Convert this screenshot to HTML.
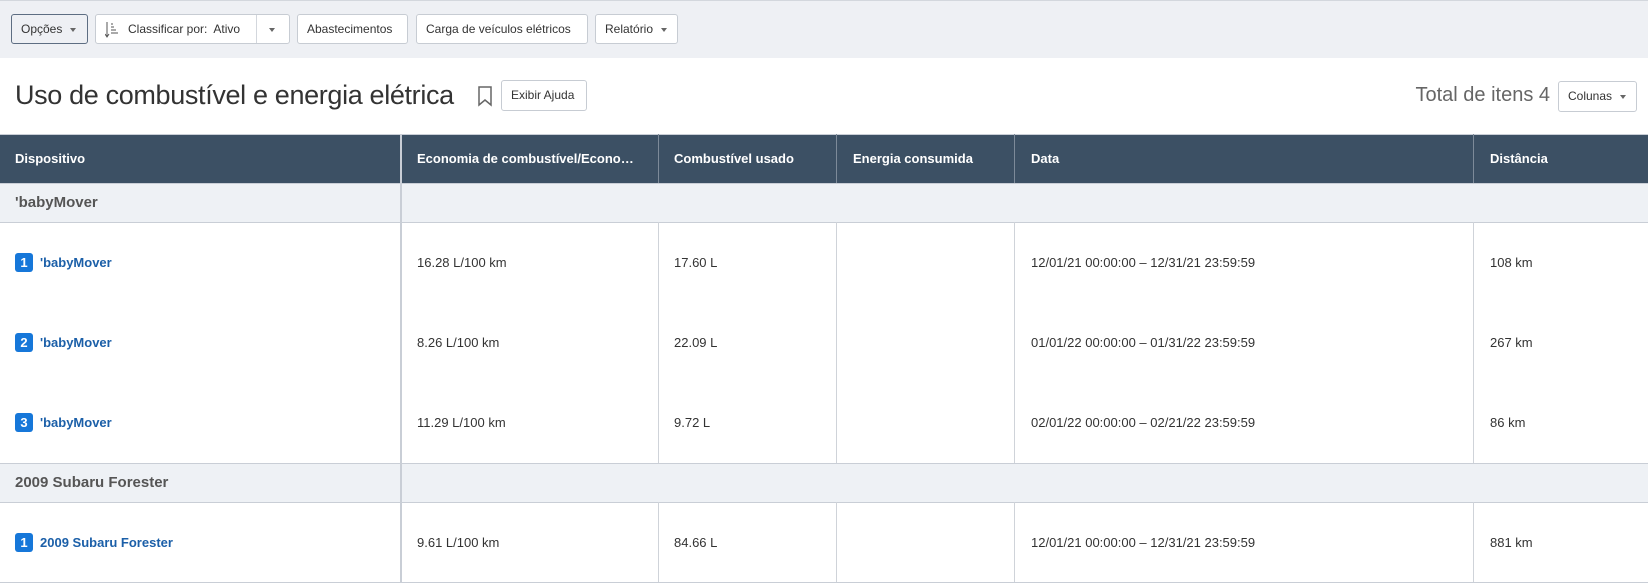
<!DOCTYPE html>
<html><head><meta charset="utf-8"><style>
*{box-sizing:border-box;margin:0;padding:0}
body{width:1648px;height:585px;overflow:hidden;background:#fff;font-family:"Liberation Sans",Arial,sans-serif;position:relative;color:#333}
.tb{position:absolute;left:0;top:0;width:1648px;height:58px;background:#eef0f4;border-top:1px solid #d3d7dd}
.btn{position:absolute;top:14px;height:30px;border:1px solid #c7ccd3;border-radius:3px;background:#fff;font-size:12px;color:#333;line-height:28px;padding:0 9px;white-space:nowrap}
.car{display:inline-block;width:0;height:0;border-left:3.5px solid transparent;border-right:3.5px solid transparent;border-top:4px solid #666;vertical-align:middle;margin-left:8px}
.abs{position:absolute}
.cell{position:absolute;font-size:13px;white-space:nowrap}
.hl{position:absolute;height:1px;background:#c9ced6;left:0;width:1648px}
.vl{position:absolute;width:1px;background:#cfd3d9}
.badge{display:inline-block;width:18px;height:19px;background:#1677d9;color:#fff;border-radius:3px;font-weight:bold;font-size:13px;text-align:center;line-height:19px;margin-right:7px;vertical-align:middle}
.lnk{color:#1b5fa8;font-weight:bold;vertical-align:middle}
</style></head><body>
<div class="tb"></div>
<div class="btn" style="left:11px;width:77px;border-color:#5d6d82;background:#eef0f4">Opções<span class="car"></span></div>
<div class="btn" style="left:95px;width:195px;padding:0">
 <svg class="abs" style="left:9px;top:7px" width="14" height="16" viewBox="0 0 14 16"><path d="M2 0v14M0 12l2 3 2-3M6 2h2M6 5h3M6 8h5M6 11h7" stroke="#555" stroke-width="1" fill="none"/></svg>
 <span class="abs" style="left:32px;top:0">Classificar por:&nbsp; Ativo</span>
 <span class="abs" style="left:160px;top:0;height:28px;border-left:1px solid #d3d7dd;width:34px"><span class="car" style="margin-left:12px"></span></span>
</div>
<div class="btn" style="left:297px;width:111px">Abastecimentos</div>
<div class="btn" style="left:416px;width:172px">Carga de veículos elétricos</div>
<div class="btn" style="left:595px;width:83px">Relatório<span class="car"></span></div>

<div class="abs" style="left:15px;top:80px;font-size:27px;letter-spacing:-0.35px;color:#333;white-space:nowrap">Uso de combustível e energia elétrica</div>
<svg class="abs" style="left:477px;top:86px" width="16" height="21" viewBox="0 0 16 21"><path d="M2 1h12v18l-6-5-6 5z" stroke="#666" stroke-width="1.5" fill="none"/></svg>
<div class="btn" style="left:501px;top:80px;width:86px;height:31px">Exibir Ajuda</div>
<div class="abs" style="right:98px;top:84px;font-size:20px;color:#666">Total de itens 4</div>
<div class="btn" style="left:1558px;top:81px;width:79px;height:31px">Colunas<span class="car"></span></div>

<div class="abs" style="left:0;top:134px;width:1648px;height:49px;background:#3c5064;border-top:1px solid #c9ced6"></div>
<div class="abs" style="left:0;top:183px;width:1648px;height:39px;background:#eef1f5"></div>
<div class="abs" style="left:0;top:463px;width:1648px;height:39px;background:#eef1f5"></div>
<div class="hl" style="top:183px"></div><div class="hl" style="top:222px"></div>
<div class="hl" style="top:463px"></div><div class="hl" style="top:502px"></div><div class="hl" style="top:582px"></div>
<div class="vl" style="left:400px;top:134px;height:449px;width:2px;background:#c9ced6"></div>
<div class="vl" style="left:658px;top:134px;height:49px;background:#7d8a99"></div>
<div class="vl" style="left:836px;top:134px;height:49px;background:#7d8a99"></div>
<div class="vl" style="left:1014px;top:134px;height:49px;background:#7d8a99"></div>
<div class="vl" style="left:1473px;top:134px;height:49px;background:#7d8a99"></div>
<div class="vl" style="left:658px;top:222px;height:241px"></div><div class="vl" style="left:836px;top:222px;height:241px"></div>
<div class="vl" style="left:1014px;top:222px;height:241px"></div><div class="vl" style="left:1473px;top:222px;height:241px"></div>
<div class="vl" style="left:658px;top:502px;height:80px"></div><div class="vl" style="left:836px;top:502px;height:80px"></div>
<div class="vl" style="left:1014px;top:502px;height:80px"></div><div class="vl" style="left:1473px;top:502px;height:80px"></div>

<div style="color:#fff;font-weight:bold;font-size:13px">
<div class="cell" style="left:15px;top:151px">Dispositivo</div>
<div class="cell" style="left:417px;top:151px">Economia de combustível/Econo…</div>
<div class="cell" style="left:674px;top:151px">Combustível usado</div>
<div class="cell" style="left:853px;top:151px">Energia consumida</div>
<div class="cell" style="left:1031px;top:151px">Data</div>
<div class="cell" style="left:1490px;top:151px">Distância</div>
</div>
<div class="cell" style="left:15px;top:194px;font-size:15px;font-weight:bold;color:#555">'babyMover</div>
<div class="cell" style="left:15px;top:474px;font-size:15px;font-weight:bold;color:#555">2009 Subaru Forester</div>

<div class="cell" style="left:15px;top:253px"><span class="badge">1</span><span class="lnk">'babyMover</span></div>
<div class="cell" style="left:417px;top:255px">16.28 L/100 km</div><div class="cell" style="left:674px;top:255px">17.60 L</div>
<div class="cell" style="left:1031px;top:255px">12/01/21 00:00:00 – 12/31/21 23:59:59</div><div class="cell" style="left:1490px;top:255px">108 km</div>

<div class="cell" style="left:15px;top:333px"><span class="badge">2</span><span class="lnk">'babyMover</span></div>
<div class="cell" style="left:417px;top:335px">8.26 L/100 km</div><div class="cell" style="left:674px;top:335px">22.09 L</div>
<div class="cell" style="left:1031px;top:335px">01/01/22 00:00:00 – 01/31/22 23:59:59</div><div class="cell" style="left:1490px;top:335px">267 km</div>

<div class="cell" style="left:15px;top:413px"><span class="badge">3</span><span class="lnk">'babyMover</span></div>
<div class="cell" style="left:417px;top:415px">11.29 L/100 km</div><div class="cell" style="left:674px;top:415px">9.72 L</div>
<div class="cell" style="left:1031px;top:415px">02/01/22 00:00:00 – 02/21/22 23:59:59</div><div class="cell" style="left:1490px;top:415px">86 km</div>

<div class="cell" style="left:15px;top:533px"><span class="badge">1</span><span class="lnk">2009 Subaru Forester</span></div>
<div class="cell" style="left:417px;top:535px">9.61 L/100 km</div><div class="cell" style="left:674px;top:535px">84.66 L</div>
<div class="cell" style="left:1031px;top:535px">12/01/21 00:00:00 – 12/31/21 23:59:59</div><div class="cell" style="left:1490px;top:535px">881 km</div>
</body></html>
